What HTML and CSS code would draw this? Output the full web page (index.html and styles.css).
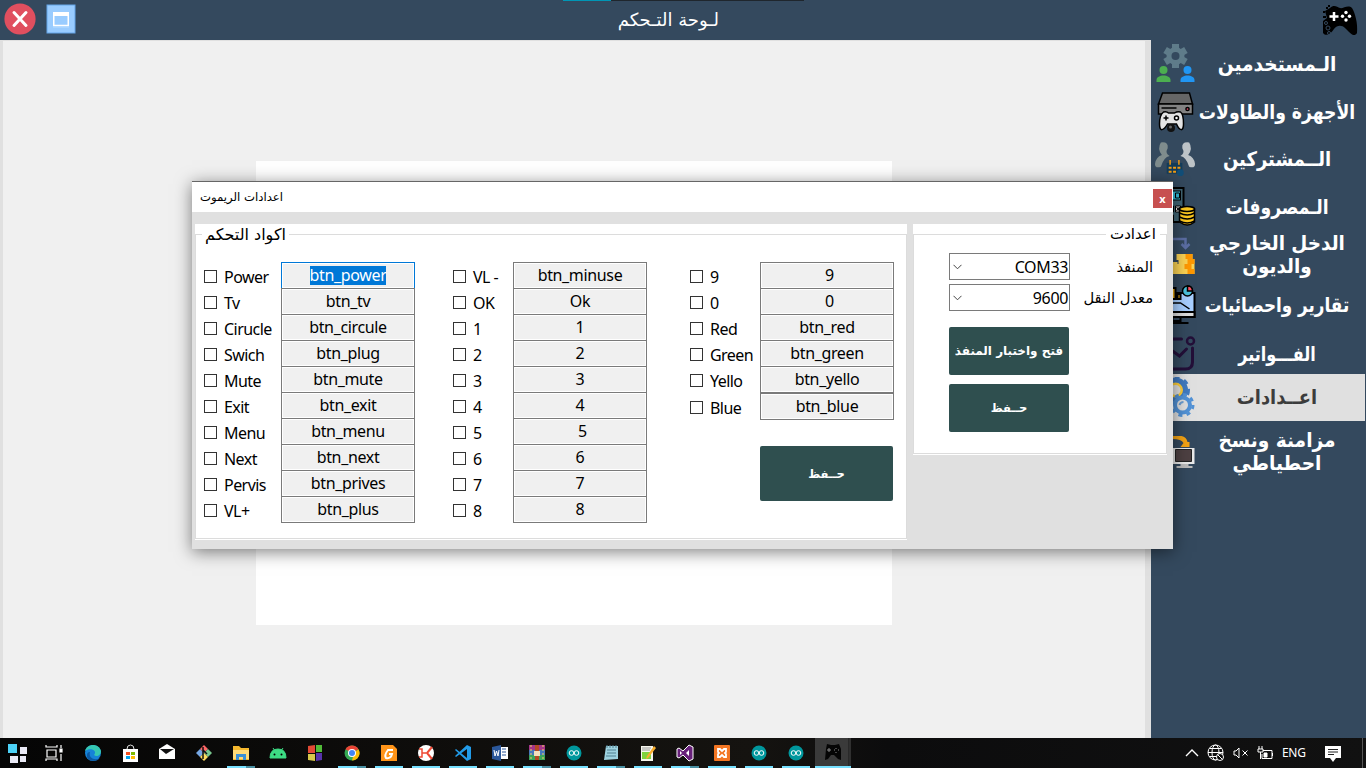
FILE: index.html
```html
<!DOCTYPE html>
<html lang="ar">
<head>
<meta charset="utf-8">
<title>لوحة التحكم</title>
<link rel="stylesheet" href="styles.css">
</head>
<body>
<div class="screen">
  <header class="topbar">
    <svg class="close-app" width="32" height="32" viewBox="0 0 32 32"><circle cx="16" cy="16" r="15.6" fill="#e04f5f"/><path d="M10 9.500l12 13M22 9.500l-12 13" stroke="#fff" stroke-width="3" stroke-linecap="round"/></svg>
    <svg class="restore-app" width="30" height="30" viewBox="0 0 30 30"><rect x="1" y="1" width="28" height="28" fill="#99ccff" stroke="#64a5e8"/><rect x="7.750" y="9" width="14.500" height="12.500" fill="#99ccff" stroke="#fff" stroke-width="1.500"/><path d="M7 8h16v4H7z" fill="#fff"/><path d="M7 23h16" stroke="#b9dcff"/></svg>
    <h1 dir="rtl">لـوحة التـحكم</h1>
    <svg class="app-logo" width="38" height="34" viewBox="0 0 38 34"><path d="M9 4c4-4 7-1 10 0s8-4 12 0c3 5 6 15 5 25-3 5-7 0-12-5-3-3-8-3-11 1-3 5-8 8-11 4V17l4-3-2-7z" fill="#000"/><path d="M13 8v9M8.500 12.500h9" stroke="#fff" stroke-width="2.500"/><g fill="#fff"><circle cx="25" cy="8.500" r="1.700"/><circle cx="25" cy="16" r="1.700"/><circle cx="21.500" cy="12.300" r="1.700"/><circle cx="28.500" cy="12.300" r="1.700"/></g><g fill="#000"><path d="M2 7h2v2H2zM5 3h2v2H5zM2 12h3v2H2zM7 1h2v2H7z"/></g><g fill="none" stroke="#34495e"><circle cx="7" cy="24" r="2"/><circle cx="5" cy="19" r="1.500"/><circle cx="8" cy="29" r="1.500"/></g></svg>
    <i class="top-strip"></i>
  </header>
  <div class="middle">
    <main class="workspace"><div class="blank-panel"></div></main>
    <nav class="sidebar">
      <div class="item"><svg width="40" height="40" viewBox="0 0 40 40"><path d="M20 0v24M9.600 6l20.800 12M9.600 18l20.800-12" stroke="#5f7c8a" stroke-width="7"/><circle cx="20" cy="12" r="9" fill="#5f7c8a"/><circle cx="20" cy="12" r="4" fill="#34495e"/><circle cx="8" cy="26" r="4" fill="#4caf50"/><path d="M1 38v-2c0-6 14-6 14 0v2z" fill="#4caf50"/><circle cx="32" cy="26" r="4" fill="#2196f3"/><path d="M25 38v-2c0-6 14-6 14 0v2z" fill="#2196f3"/></svg><span class="t1" dir="rtl">الـمستخدمين</span></div>
      <div class="item"><svg width="40" height="40" viewBox="0 0 40 40"><g stroke="#000" stroke-width="1.500"><path d="M7 1h27l3 11H3z" fill="#666"/><path d="M3 12h34v10H3z" fill="#838383"/><path d="M6 16h15" fill="none"/><circle cx="32" cy="17" r="1.600" fill="#ef4a6b"/><path d="M8 20q3-1 5 1h6q3-2 6-1 3 2 3 12c0 8-4 7-7 0h-9c-4 7-8 8-8 0q0-9 4-12z" fill="#e4e4e4"/><circle cx="21" cy="26" r="2" fill="#fff"/><path d="M8 26h5M10.500 23.500v5"/></g><circle cx="15.500" cy="36" r="4" fill="#111"/><circle cx="15" cy="35" r="1.500" fill="#666"/></svg><span class="t2" dir="rtl">الأجهزة والطاولات</span></div>
      <div class="item"><svg width="42" height="36" viewBox="0 0 42 36"><path d="M6 1Q14 0 13 7q-3 5 2 8-6 1-9 11-6 2-6-3 1-7 7-9Q2 7 6 1z" fill="#7f8c8d"/><path d="M35 1q-8-1-7 6 3 5-2 8 6 1 9 11 6 2 6-3-1-7-7-9 5-7 1-13z" fill="#bdc3c7"/><path d="M12 22h16v11H12z" fill="#123c5b"/><path d="M15.500 19v5M24.500 19v5" stroke="#f39c12" stroke-width="1.500"/><path d="M14 26h3v2h-3zM18.500 26h3v2h-3zM23 26h3v2h-3zM14 30h3v2h-3zM18.500 30h3v2h-3z" fill="#f39c12"/><circle cx="26" cy="32" r="3.500" fill="#124e78"/></svg><span class="t3" dir="rtl">الــمشتركين</span></div>
      <div class="item"><svg width="40" height="40" viewBox="0 0 40 40"><rect x="8" y="1" width="20" height="34" fill="#426675" stroke="#000" stroke-width="2"/><rect x="11" y="4" width="14" height="9" fill="#35bedb" stroke="#000"/><path d="M20 6h4v5h-4z" fill="none" stroke="#000"/><path d="M13 19h5v6h-5zM20 19h5v6h-5zM13 28h5v6h-5z" fill="#eee" stroke="#000"/><path d="M14 20l3 4M17 20l-3 4M21 20l3 4M24 20l-3 4" stroke="#000"/><g fill="#ffca20" stroke="#000" stroke-width="1.500"><path d="M24 22v13q8 6 15 0V22z"/><ellipse cx="31.500" cy="22" rx="7.500" ry="2.500"/><path d="M24 26q8 4 15 0M24 30q8 4 15 0M24 34q8 4 15 0" fill="none"/></g></svg><span class="t4" dir="rtl">الـمصروفات</span></div>
      <div class="item two"><svg width="40" height="40" viewBox="0 0 40 40"><path d="M12 4h18v9M26 9l4 4 4-4" fill="none" stroke="#5c6fa5" stroke-width="2.500"/><path d="M13 27h9v12h-9zM21 19h16v5h2v15H22v-5h-1v-5h2v-4h-2z" fill="#fcd354"/><path d="M30 19h7v5h-7zM32 24h7v5h-7zM29 29h7v5h-7zM32 34h7v5h-7z" fill="#ff9800"/></svg><span class="t5" dir="rtl">الدخل الخارجي<br>والديون</span></div>
      <div class="item reports"><svg width="40" height="40" viewBox="0 0 40 40"><g stroke="#000" stroke-width="2"><rect x="4" y="8" width="35" height="24" fill="#a8cfff"/><path d="M4 27h35v5H4z" fill="#ddd"/><path d="M17 32v4h8v-4M9 38h24" fill="none"/><path d="M8 25l10-7 7 0 9 6" fill="none" stroke-width="1.500"/><path d="M16 14h4V3h-4zM22 14h3V9h-3z" fill="#f7b51b"/><circle cx="32" cy="6" r="5" fill="#4cc3dd" stroke-width="1.500"/><path d="M32 1v5h5q0-5-5-5z" fill="#ff5263" stroke-width="1.500"/></g></svg><span class="t6" dir="rtl">تقارير واحصائيات</span></div>
      <div class="item bills"><svg width="40" height="40" viewBox="0 0 40 40"><path d="M26 5H10q-6 0-6 6v18q0 6 6 6h20q7 0 7-7V14M17 17l7 5 7-7" fill="none" stroke="#230f38" stroke-width="3" stroke-linecap="round"/><circle cx="35" cy="7" r="3.500" fill="none" stroke="#230f38" stroke-width="2.500"/></svg><span class="t7" dir="rtl">الفـــواتير</span></div>
      <div class="item active"><svg width="40" height="40" viewBox="0 0 40 40"><circle cx="20" cy="13" r="10" fill="#ffcf3c" stroke="#427bc0" stroke-width="5"/><circle cx="20" cy="13" r="13" fill="none" stroke="#427bc0" stroke-width="3" stroke-dasharray="5 5"/><circle cx="20" cy="13" r="5" fill="#e0e0e0"/><circle cx="27" cy="28" r="7.500" fill="#e0e0e0" stroke="#5292d6" stroke-width="4"/><circle cx="27" cy="28" r="10.500" fill="none" stroke="#5292d6" stroke-width="3" stroke-dasharray="4 4.250"/><path d="M24 28q1-3 4-3" stroke="#6c9ed2" stroke-width="2" fill="none"/></svg><span class="t8" dir="rtl">اعــدادات</span></div>
      <div class="item two last"><svg width="40" height="40" viewBox="0 0 40 40"><path d="M17 5h9q5 1 6 6h2v5h-9l3-4q-2-4-11-4z" fill="#f5a414"/><path d="M12 17h27v16H12z" fill="#e9e9e9"/><path d="M20 18.500h16v12H20z" fill="#4d4042" stroke="#222"/><path d="M25 33h8v2h4v2H21v-2h4z" fill="#bbb"/></svg><span class="t9" dir="rtl">مزامنة ونسخ<br>احطياطي</span></div>
    </nav>
  </div>

  <footer class="taskbar">
    <div class="slot"><svg viewBox="0 0 20 20"><path d="M1 1h9v9H1z" fill="#4cd2f7"/><path d="M13 4h7v7h-7zM3 13h8v8H3zM13 13h6v6h-6z" fill="#e9e9f5"/></svg></div>
    <div class="slot tv"><svg viewBox="0 0 20 20" fill="none" stroke="#fff" stroke-width="1.200"><path d="M2 2v2h11V2M3 7h9v7H3zM2 18v-2h11v2M17 2v3M17 11v7"/><path d="M16 6h2v3h-2z" fill="#fff"/></svg></div>
    <div class="slot"><svg viewBox="0 0 20 20"><circle cx="10" cy="10" r="8" fill="#1683d8"/><path d="M2 8C4 0 16 0 18 8c0 5-5 6-7 4 4-5-4-8-9-4z" fill="#35c7b2"/><path d="M7 9c-2 6 5 9 10 6-4 5-14 3-13-3 0-2 1-3 3-3z" fill="#0c59a4"/></svg></div>
    <div class="slot"><svg viewBox="0 0 20 20"><path d="M3 6h15v13H3z" fill="#fff"/><path d="M7 6q0-4 3.500-4T14 6" fill="none" stroke="#ddd"/><path d="M6 9h4v3H6z" fill="#f25022"/><path d="M11 9h4v3h-4z" fill="#7fba00"/><path d="M6 13h4v3H6z" fill="#00a4ef"/><path d="M11 13h4v3h-4z" fill="#ffb900"/></svg></div>
    <div class="slot"><svg viewBox="0 0 20 20"><path d="M2 6l8-5 8 5v10H2z" fill="#fff"/><path d="M3 6h14l-8 5z" fill="#111"/></svg></div>
    <div class="slot"><svg viewBox="0 0 20 20"><path d="M10 2l4 4-4 4-4-4z" fill="#f66"/><path d="M14 6l4 4-4 4-4-4z" fill="#79c68d"/><path d="M6 6l4 4-4 4-4-4z" fill="#77a8e4"/><path d="M10 10l4 4-4 4-4-4z" fill="#ffdc60"/><path d="M9 4v12M9 7l4 4" stroke="#111" stroke-width="1.500"/></svg></div>
    <div class="slot open multi"><svg viewBox="0 0 20 20"><path d="M2 3h6l2 2h8v12H2z" fill="#f5b82e"/><path d="M2 7h16v9H2z" fill="#ffda78"/><path d="M5 17v-6h10v6h-3v-3H8v3z" fill="#3a8fd6"/></svg></div>
    <div class="slot"><svg viewBox="0 0 20 20"><path d="M2 15q0-9 8-9t8 9zM5 5l2 3M15 5l-2 3" fill="#3ddc84" stroke="#3ddc84"/><circle cx="6.500" cy="11.500" r="1"/><circle cx="13.500" cy="11.500" r="1"/></svg></div>
    <div class="slot"><svg viewBox="0 0 20 20"><path d="M3 3l7-1v8H3z" fill="#e24a35"/><path d="M11 2h6v7h-6z" fill="#51bb38"/><path d="M3 11h7v7l-7-1z" fill="#d8c94b"/><path d="M11 10h6v7l-6 1z" fill="#5734ad"/></svg></div>
    <div class="slot open multi"><svg viewBox="0 0 20 20"><circle cx="10" cy="10" r="7.500" fill="#34a853"/><path d="M3.500 6.200a7.500 7.500 0 0 1 13 0L10 10z" fill="#ea4335"/><path d="M16.500 6.200A7.500 7.500 0 0 1 10 17.500L12 10z" fill="#fbbc04"/><circle cx="10" cy="10" r="4" fill="#fff"/><circle cx="10" cy="10" r="3" fill="#4285f4"/></svg></div>
    <div class="slot open"><svg viewBox="0 0 20 20"><path d="M2 2h12l4 4v12H2z" fill="#ff9419"/><path d="M14 7H9q-4 5-2 8 5 1 6-4h-3" fill="none" stroke="#fff" stroke-width="2"/></svg></div>
    <div class="slot open"><svg viewBox="0 0 20 20"><circle cx="10" cy="10" r="8" fill="#fff"/><path d="M3 6h3v8H3M6 10h4" fill="none" stroke="#ef4a35" stroke-width="1.500"/><path d="M16 4l-5 6 5 6" fill="none" stroke="#ef4a35" stroke-width="2"/></svg></div>
    <div class="slot open"><svg viewBox="0 0 20 20"><path d="M14 2l4 2v12l-4 2-12-11 1-1 11 9V6L3 14l-1-1z" fill="#229be8"/></svg></div>
    <div class="slot open"><svg viewBox="0 0 20 20"><path d="M11 4h7v12h-7z" fill="#fff"/><path d="M12 6h4M12 9h4M12 12h4" stroke="#2b579a"/><path d="M2 4l9-2v16l-9-2z" fill="#2b579a"/><path d="M4 7l1 6 1.500-5L8 13l1-6" stroke="#fff" fill="none"/></svg></div>
    <div class="slot open multi"><svg viewBox="0 0 20 20"><path d="M2 2h16v5H2z" fill="#a53688"/><path d="M2 7h16v5H2z" fill="#4876bb"/><path d="M2 12h16v5H2z" fill="#3ba35b"/><path d="M8 2h4v15H8z" fill="#b64a22"/><path d="M7 8h6v5H7z" fill="#f4dfbb"/><path d="M4 2v15M16 2v15" stroke="#f4d45c" stroke-dasharray="2"/></svg></div>
    <div class="slot open"><svg viewBox="0 0 20 20"><circle cx="10" cy="10" r="7.500" fill="#00979d"/><circle cx="7.500" cy="10" r="2.300" fill="none" stroke="#fff"/><circle cx="12.500" cy="10" r="2.300" fill="none" stroke="#fff"/></svg></div>
    <div class="slot open multi"><svg viewBox="0 0 20 20"><path d="M5 3h12v13l-14 1z" fill="#9ed2df"/><path d="M6 2v3M9 2v3M12 2v3M15 2v3M6 7h9M6 10h9M5 13h10" stroke="#518091"/></svg></div>
    <div class="slot open"><svg viewBox="0 0 20 20"><path d="M3 3h12v15H3z" fill="#f5f5ed"/><path d="M4 9h9v7H4z" fill="#7fd23d"/><path d="M4 5h9M4 7h8" stroke="#999"/><path d="M16 3l2 2-8 10-2 1 1-3z" fill="#f8ad2d"/></svg></div>
    <div class="slot open multi"><svg viewBox="0 0 20 20"><path d="M14 2l4 2v12l-4 2-6-6-4 3-2-1V6l2-1 4 3z" fill="#68217a" stroke="#fff"/><path d="M5 8v4l2-2zM14 7v6l-3-3z" fill="#fff"/></svg></div>
    <div class="slot open"><svg viewBox="0 0 20 20"><rect x="2" y="2" width="16" height="16" rx="1" fill="#f37623"/><path d="M6 6h2l2 2 2-2h2v3l-1 1 1 1v3h-2l-2-2-2 2H6v-3l1-1-1-1z" fill="none" stroke="#fff" stroke-width="1.800"/></svg></div>
    <div class="slot open"><svg viewBox="0 0 20 20"><circle cx="10" cy="10" r="7.500" fill="#00979d"/><circle cx="7.500" cy="10" r="2.300" fill="none" stroke="#fff"/><circle cx="12.500" cy="10" r="2.300" fill="none" stroke="#fff"/></svg></div>
    <div class="slot open"><svg viewBox="0 0 20 20"><circle cx="10" cy="10" r="7.500" fill="#00979d"/><circle cx="7.500" cy="10" r="2.300" fill="none" stroke="#fff"/><circle cx="12.500" cy="10" r="2.300" fill="none" stroke="#fff"/></svg></div>
    <div class="slot current"><svg viewBox="0 0 20 20"><path d="M4 2l4 1h4l4-1 2 5v11l-3-1-4-4H8l-3 4-3 1 1-11z" fill="#050505"/><path d="M6 6v4M4 8h4M13 6v1M13 10v1M11 8h1M15 8h1" stroke="#888"/></svg></div>
    <div class="tray">
      <svg width="14" height="10" viewBox="0 0 14 10"><path d="M1 8l6-6 6 6" fill="none" stroke="#fff" stroke-width="1.400"/></svg>
      <svg width="18" height="18" viewBox="0 0 18 18" fill="none" stroke="#fff"><circle cx="8.500" cy="8.500" r="7.500"/><ellipse cx="8.500" cy="8.500" rx="3.500" ry="7.500"/><path d="M1 8.500h15M2.500 4.500h12M2.500 12.500h8"/><circle cx="13" cy="13" r="3.500" fill="#080808"/><path d="M10.700 10.700l4.600 4.600"/></svg>
      <svg width="16" height="14" viewBox="0 0 16 14" fill="none" stroke="#fff"><path d="M1 5h2l3-3v10L3 9H1zM9.500 4.500l5 5M14.500 4.500l-5 5"/></svg>
      <svg width="17" height="14" viewBox="0 0 17 14" fill="none" stroke="#fff"><path d="M6 4.500h9v8H5V8M15.500 7v3M2 0v3M5 0v3M1 3h5v3H1zM3.500 6v7"/><path d="M7 7h3v4H7z" fill="#fff"/></svg>
      <span class="lang">ENG</span>
      <svg class="note" width="18" height="17" viewBox="0 0 18 17"><path d="M1 1h16v12h-5l-3 4-3-4H1z" fill="#fff"/><path d="M4 4.500h10M4 7h10M4 9.500h6" stroke="#222"/></svg>
      <i class="desk-edge"></i>
    </div>
  </footer>

  <section class="dialog">
    <div class="titlebar"><span class="dlg-title" dir="rtl">اعدادات الريموت</span><button class="dlg-close">x</button></div>
    <div class="dlg-body">
      <div class="group codes">
        <div class="frame"></div>
        <span class="legend" dir="rtl">اكواد التحكم</span>
        <div class="columns">
          <ul class="checks c1"><li>Power</li><li>Tv</li><li>Cirucle</li><li>Swich</li><li>Mute</li><li>Exit</li><li>Menu</li><li>Next</li><li>Pervis</li><li>VL+</li></ul>
          <ul class="fields"><li class="focus"><mark>btn_power</mark></li><li>btn_tv</li><li>btn_circule</li><li>btn_plug</li><li>btn_mute</li><li>btn_exit</li><li>btn_menu</li><li>btn_next</li><li>btn_prives</li><li>btn_plus</li></ul>
          <ul class="checks c2"><li>VL -</li><li>OK</li><li>1</li><li>2</li><li>3</li><li>4</li><li>5</li><li>6</li><li>7</li><li>8</li></ul>
          <ul class="fields"><li>btn_minuse</li><li>Ok</li><li>1</li><li>2</li><li>3</li><li>4</li><li class="nudge">5</li><li>6</li><li>7</li><li>8</li></ul>
          <ul class="checks c3"><li>9</li><li>0</li><li>Red</li><li>Green</li><li>Yello</li><li class="apart">Blue</li></ul>
          <div class="third"><ul class="fields"><li class="nudge">9</li><li class="nudge">0</li><li>btn_red</li><li>btn_green</li><li>btn_yello</li><li class="apart">btn_blue</li></ul><button class="save big" dir="rtl">حــفظ</button></div>
        </div>
      </div>
      <div class="group port">
        <div class="frame"></div>
        <span class="legend" dir="rtl">اعدادت</span>
        <div class="port-rows">
          <div class="port-row"><div class="combo"><svg width="9" height="6" viewBox="0 0 9 6"><path d="M.5.8l4 4 4-4" fill="none" stroke="#444"/></svg><span>COM33</span></div><label class="la" dir="rtl">المنفذ</label></div>
          <div class="port-row"><div class="combo"><svg width="9" height="6" viewBox="0 0 9 6"><path d="M.5.8l4 4 4-4" fill="none" stroke="#444"/></svg><span>9600</span></div><label class="lb" dir="rtl">معدل النقل</label></div>
          <button class="save test" dir="rtl">فتح واختبار المنفذ</button>
          <button class="save" dir="rtl">حــفظ</button>
        </div>
      </div>
    </div>
  </section>
</div>
</body>
</html>
```
FILE: styles.css
```css
*, *::before { box-sizing: border-box; }
body { margin: 0; font-family: "Noto Sans", "DejaVu Sans", sans-serif; }
ul { list-style: none; margin: 0; padding: 0; }
button { border: 0; padding: 0; font-family: inherit; }
[dir="rtl"] { font-family: "DejaVu Sans", sans-serif; }
.screen { position: relative; width: 1366px; height: 768px; overflow: hidden; display: flex; flex-direction: column; background: #34495e; }

.topbar { position: relative; height: 40px; flex: none; display: flex; align-items: center; background: #34495e; }
.close-app { margin: -2px 0 0 4px; }
.restore-app { margin: -2px 0 0 10px; }
.topbar h1 { margin: 0 0 0 542px; width: 101px; white-space: nowrap; color: #fff; font-size: 18px; font-weight: 400; text-align: left; line-height: 38px; }
.app-logo { margin: 1px 7px 0 auto; }
.top-strip { position: absolute; top: 0; left: 563px; width: 241px; height: 1px; background: linear-gradient(90deg, #0096b5 48px, #1f262d 48px); }

.middle { flex: 1; display: flex; min-height: 0; }
.workspace { width: 1151px; border: solid #e0e0e0; border-width: 1px 6px 0 3px; background: #f0f0f0; padding: 120px 0 0 253px; }
.blank-panel { width: 636px; height: 464px; background: #fff; }
.sidebar { width: 214px; color: #fff; font-weight: 700; }
.item { height: 47.714px; display: flex; align-items: center; padding-left: 4px; }
.item svg { flex: none; width: 41px; }
.item span { flex: none; width: 190px; margin-left: -14px; padding-top: 1px; text-align: center; font-size: 20px; line-height: 23px; white-space: nowrap; }
.item .t1 { transform: scaleX(.93); }
.item .t2 { transform: scaleX(.86); }
.item .t3 { transform: scaleX(.9); }
.item .t4 { transform: scaleX(.86); }
.item .t5 { transform: scaleX(.92); }
.item .t6 { transform: scaleX(.84); }
.item .t7 { transform: scaleX(.8); }
.item .t8 { transform: scaleX(.895); }
.item .t9 { transform: scaleX(.93); }
.item.reports { padding-top: 6px; }
.item.bills { padding-top: 7px; }
.item.active { height: 47px; background: #e0e0e0; color: #3c3c3c; }
.item.last { height: 61px; }

.taskbar { height: 30px; flex: none; display: flex; background: linear-gradient(90deg, #050505, #151310 55%, #0c0c0d 65%, #111 100%); }
.slot { width: 37px; height: 30px; display: flex; justify-content: center; align-items: center; position: relative; }
.slot svg { width: 20px; height: 20px; }
.slot:first-child { width: 34px; }
.slot.tv { width: 40px; }
.slot.open::after { content: ""; position: absolute; left: 5px; bottom: 0; width: 28px; height: 2px; background: #76e0ff; }
.slot.multi::after { background: linear-gradient(90deg, #76e0ff 19px, #498fa2 19px); }
.slot.current { background: linear-gradient(90deg, #3a3a3a 33px, #222 33px, #303030 34px); border-bottom: 2px solid #76e0ff; width: 36px; margin-left: 1px; }
.tray { margin-left: auto; display: flex; align-items: center; color: #fff; }
.tray svg { margin-right: 8px; }
.tray .lang { font-size: 12px; letter-spacing: -.3px; width: 24px; margin: 0 18px 2px 0; }
.tray .note { margin-right: 20px; }
.desk-edge { width: 1px; height: 30px; background: #555; margin-right: 3px; }

.dialog { position: absolute; left: 192px; top: 181px; width: 981px; height: 368px; background: #e0e0e0; border-top: 1px solid #666; box-shadow: 0 3px 16px rgba(0,0,0,.5); color: #000; }
.titlebar { height: 30px; background: #fff; display: flex; justify-content: space-between; padding-left: 8px; }
.dlg-title { font-size: 11.7px; line-height: 30px; }
.dlg-close { width: 19px; height: 19px; margin: 7px 1px 0 0; background: #c75050; color: #fff; font: 700 11px/16px "Noto Sans", sans-serif; }
.dlg-body { display: flex; align-items: flex-start; gap: 6px; padding: 12px 0 0 3px; }
.group { position: relative; background: #fff; }
.codes { width: 712px; height: 316px; }
.port { width: 254px; height: 231px; }
.frame { position: absolute; inset: 10px 0 1px 0; border: 1px solid #dcdcdc; }
.legend { position: absolute; top: 0; background: #fff; font-size: 16px; line-height: 21px; white-space: nowrap; }
.codes .legend { left: 7px; padding: 0 3px; }
.port .legend { right: 7px; padding: 0 4px; font-size: 15px; }
.columns { position: relative; display: flex; padding: 38px 0 0 9px; font-size: 16px; letter-spacing: -.35px; }
.checks { padding-top: 2px; letter-spacing: -.55px; }
.checks li { height: 26px; display: flex; align-items: center; gap: 7px; line-height: 24px; white-space: nowrap; }
.checks li::before { content: ""; flex: none; width: 13px; height: 13px; border: 1px solid #333; background: #fff; margin-top: -1px; }
.c1 { width: 77px; }
.c2 { margin-left: 38px; width: 60px; }
.c3 { margin-left: 43px; width: 70px; }
.checks .apart { margin-top: 1px; }
.fields li { width: 134px; height: 27px; margin-bottom: -1px; border: 1px solid #7a7a7a; background: #f0f0f0; box-shadow: inset 0 0 0 1px #fff; text-align: center; line-height: 25px; }
.fields li.focus { border-color: #0078d7; }
.fields li.apart { margin-top: 1px; }
.fields li.nudge { padding-left: 5px; }
.fields mark { background: #0078d7; color: #fff; display: inline-block; line-height: 19px; }
.save { display: block; width: 120px; height: 48px; border-radius: 2px; background: #2f4f4f; color: #fff; font-size: 11.5px; font-weight: 700; white-space: nowrap; letter-spacing: 0; }
.save.big { width: 133px; height: 55px; margin-top: 27px; }
.port-rows { position: relative; padding: 29px 14px 0 36px; }
.port-row { display: flex; justify-content: space-between; align-items: center; height: 27px; margin-bottom: 4px; }
.combo { width: 121px; height: 27px; border: 1px solid #7a7a7a; display: flex; align-items: center; justify-content: space-between; padding: 0 1px 0 3px; font-size: 16px; letter-spacing: -.35px; }
.port-row label { font-size: 14.7px; white-space: nowrap; }
.port-rows .save { margin-top: 9px; }
.port-rows .test { margin-top: 16px; font-size: 12px; }
```
